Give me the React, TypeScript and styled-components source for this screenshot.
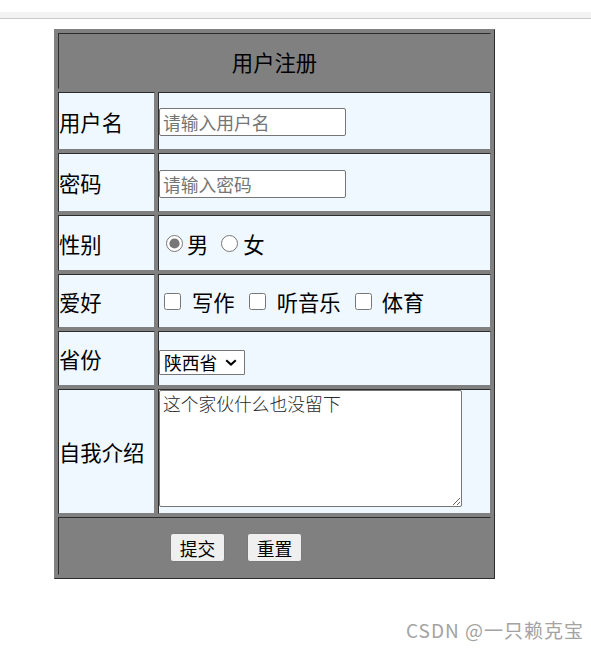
import React from 'react';
import styled, { createGlobalStyle } from 'styled-components';

const GlobalStyle = createGlobalStyle`
  * {
    box-sizing: border-box;
  }

  html,
  body {
    margin: 0;
    padding: 0;
    background: #ffffff;
  }

  body {
    font-family: "Noto Sans CJK SC", "Noto Sans", sans-serif;
    color: #000000;
  }
`;

const Page = styled.div`
  position: relative;
  width: 591px;
  height: 649px;
  padding-top: 12px;
  overflow: hidden;
`;

const TopStrip = styled.div`
  height: 7px;
  background: #f3f3f3;
  border-bottom: 1px solid #c9c9c9;
`;

const FormTable = styled.table`
  margin: 10px 0 0 54px;
  width: 441px;
  table-layout: fixed;
  border-collapse: separate;
  border-spacing: 3px;
  background: #808080;
  border: 1px solid;
  border-color: #808080 #2c2c2c #2c2c2c #808080;
  font-size: 21.33px;
`;

const Row = styled.tr<{ $h: number }>`
  height: ${(p) => p.$h}px;
`;

const Cell = styled.td<{ $gray?: boolean }>`
  padding: 0;
  border: 1px solid;
  border-color: #2c2c2c #808080 #808080 #2c2c2c;
  background: ${(p) => (p.$gray ? '#808080' : '#f0f8ff')};
  vertical-align: middle;
  text-align: left;
  font-weight: 400;
`;

const TitleCell = styled(Cell).attrs({ as: 'th' })`
  text-align: center;
`;

const TextInput = styled.input`
  display: block;
  margin-top: 2px;
  width: 187px;
  height: 28px;
  padding: 0 3px;
  border: 1px solid #767676;
  border-radius: 2px;
  background: #ffffff;
  font-family: inherit;
  font-size: 17.78px;
  color: #000000;
  outline: none;

  &::placeholder {
    color: #757575;
  }
`;

const Options = styled.div`
  display: flex;
  align-items: center;
  height: 31px;
`;

const Toggle = styled.input<{ $lead: number; $trail: number }>`
  width: 17px;
  height: 17px;
  margin: 0 ${(p) => p.$trail}px 0 ${(p) => p.$lead}px;
  flex: none;
  accent-color: #777777;
`;

const ChoiceText = styled.span`
  line-height: 31px;
  white-space: nowrap;
`;

const SelectWrap = styled.div`
  position: relative;
  width: 86px;
  height: 25px;
  margin-top: 8px;
`;

const Select = styled.select`
  display: block;
  appearance: none;
  width: 86px;
  height: 25px;
  padding: 0 0 0 4px;
  border: 1px solid #767676;
  border-radius: 1px;
  background: #ffffff;
  font-family: inherit;
  font-size: 17.78px;
  line-height: 23px;
  color: #000000;
  outline: none;
`;

const Chevron = styled.svg`
  position: absolute;
  left: 66px;
  top: 9px;
  width: 12px;
  height: 7px;
  pointer-events: none;
`;

const Intro = styled.textarea`
  display: block;
  width: 303px;
  height: 117px;
  margin: 0 0 6px;
  padding: 2px 3px;
  border: 1px solid #767676;
  border-radius: 2px;
  background: #ffffff;
  font-family: "Noto Sans CJK SC", sans-serif;
  font-weight: 300;
  font-size: 17.78px;
  line-height: 20px;
  color: #2a2a2a;
  outline: none;
`;

const Actions = styled.div`
  display: flex;
  gap: 22px;
  margin-top: 3px;
  padding-left: 111px;
`;

const ActionButton = styled.button`
  width: 55px;
  height: 29px;
  padding: 0;
  border: 1px solid #7a7a7a;
  border-radius: 3px;
  background: #efefef;
  font-family: inherit;
  font-size: 17.78px;
  color: #000000;
`;

const Watermark = styled.div`
  position: absolute;
  right: 7px;
  top: 619px;
  font-size: 19px;
  line-height: 22px;
  letter-spacing: 1px;
  color: #a3a3a3;
  white-space: nowrap;
`;

export default function App() {
  return (
    <Page>
      <GlobalStyle />
      <TopStrip />
      <form onSubmit={(e) => e.preventDefault()}>
        <FormTable>
          <colgroup>
            <col style={{ width: 97 }} />
            <col />
          </colgroup>
          <tbody>
            <Row $h={56}>
              <TitleCell $gray colSpan={2}>用户注册</TitleCell>
            </Row>
            <Row $h={58}>
              <Cell>用户名</Cell>
              <Cell>
                <TextInput type="text" placeholder="请输入用户名" />
              </Cell>
            </Row>
            <Row $h={59}>
              <Cell>密码</Cell>
              <Cell>
                <TextInput type="password" placeholder="请输入密码" />
              </Cell>
            </Row>
            <Row $h={56}>
              <Cell>性别</Cell>
              <Cell>
                <Options>
                  <Toggle type="radio" name="sex" defaultChecked $lead={7} $trail={4} />
                  <ChoiceText>男</ChoiceText>
                  <Toggle type="radio" name="sex" $lead={13} $trail={5} />
                  <ChoiceText>女</ChoiceText>
                </Options>
              </Cell>
            </Row>
            <Row $h={54}>
              <Cell>爱好</Cell>
              <Cell>
                <Options>
                  <Toggle type="checkbox" $lead={5} $trail={11} />
                  <ChoiceText>写作</ChoiceText>
                  <Toggle type="checkbox" $lead={14} $trail={11} />
                  <ChoiceText>听音乐</ChoiceText>
                  <Toggle type="checkbox" $lead={14} $trail={10} />
                  <ChoiceText>体育</ChoiceText>
                </Options>
              </Cell>
            </Row>
            <Row $h={55}>
              <Cell>省份</Cell>
              <Cell>
                <SelectWrap>
                  <Select defaultValue="sx">
                    <option value="sx">陕西省</option>
                    <option value="hn">河南省</option>
                    <option value="sd">山东省</option>
                  </Select>
                  <Chevron viewBox="0 0 12 7">
                    <path d="M1.2 1.2 L6 5.6 L10.8 1.2" fill="none" stroke="#000" strokeWidth="2" />
                  </Chevron>
                </SelectWrap>
              </Cell>
            </Row>
            <Row $h={125}>
              <Cell>自我介绍</Cell>
              <Cell>
                <Intro defaultValue="这个家伙什么也没留下" />
              </Cell>
            </Row>
            <Row $h={58}>
              <Cell $gray colSpan={2}>
                <Actions>
                  <ActionButton type="submit">提交</ActionButton>
                  <ActionButton type="reset">重置</ActionButton>
                </Actions>
              </Cell>
            </Row>
          </tbody>
        </FormTable>
      </form>
      <Watermark>CSDN @一只赖克宝</Watermark>
    </Page>
  );
}
